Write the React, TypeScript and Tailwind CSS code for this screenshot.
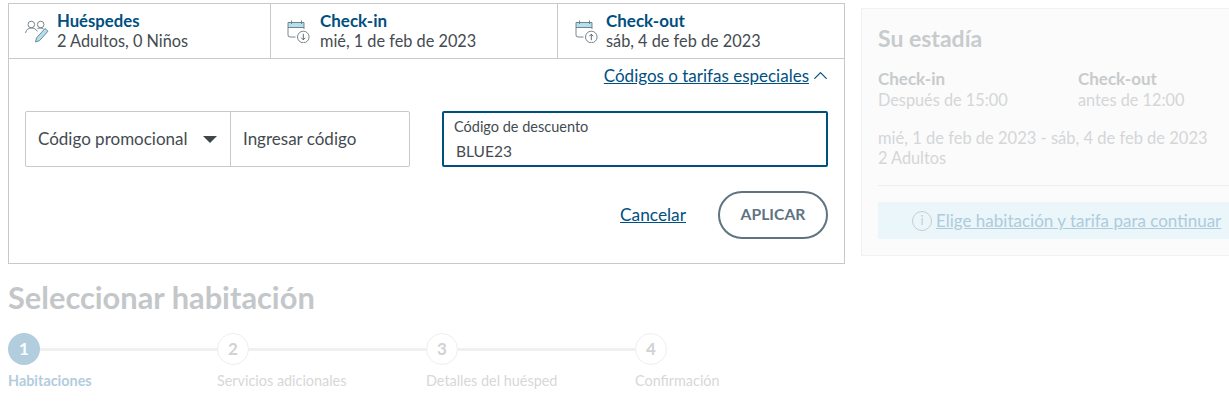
import React from 'react';
import { ChevronUp } from 'lucide-react';

const GuestsIcon = () => (
  <svg width="26" height="26" viewBox="0 0 26 26" fill="none" className="shrink-0">
    <circle cx="6.300" cy="6.500" r="3.300" stroke="#6b7880" strokeWidth="0.9" />
    <circle cx="15.700" cy="6.500" r="3.300" stroke="#6b7880" strokeWidth="0.9" />
    <path d="M.5 15c.6-3.400 3-5 5.800-5s5 1.200 6 3.400M12.500 10.600c1-.4 1.800-.6 2.800-.6 1.300 0 2.500.4 3.400 1.100" stroke="#6b7880" strokeWidth="0.9" />
    <path d="M10.500 24l1-4 8.500-9.500 3 2.700-8.500 9.500z" fill="#b5deee" stroke="#5f7f90" strokeWidth="0.9" strokeLinejoin="round" />
  </svg>
);

const CalendarIcon = ({ dir }: { dir: 'down' | 'up' }) => (
  <svg width="24" height="24" viewBox="0 0 24 24" fill="none" className="shrink-0">
    <rect x="2" y="3.500" width="16" height="5" fill="#b5deee" />
    <path d="M9.500 18H4a2 2 0 0 1-2-2V3.500h16v6.500M2 8.500h16" stroke="#6b7880" strokeWidth="0.9" />
    <path d="M5.500 1.500v3.500M15.500 1.500v3.500" stroke="#6b7880" strokeWidth="0.9" />
    <circle cx="17.300" cy="18" r="5.800" stroke="#6b7880" strokeWidth="0.9" />
    {dir === 'down' ? (
      <path d="M17.300 14.800v6M15.300 18.800l2 2 2-2" stroke="#4d5a62" strokeWidth="0.9" />
    ) : (
      <path d="M17.300 21.200v-6M15.300 17.200l2-2 2 2" stroke="#4d5a62" strokeWidth="0.9" />
    )}
  </svg>
);

const steps = [
  { n: 1, label: 'Habitaciones' },
  { n: 2, label: 'Servicios adicionales' },
  { n: 3, label: 'Detalles del huésped' },
  { n: 4, label: 'Confirmación' },
];

export default function App() {
  return (
    <div className="h-[407px] w-[1229px] overflow-hidden bg-white font-['Lato','Liberation_Sans',sans-serif] text-[16.300px] text-[#444b50]">
      <div className="flex items-start gap-4 pl-2 pt-[3px]">
        <div className="w-[837px] shrink-0">
          {/* Booking box */}
          <div className="h-[261px] w-full border border-[#c9c9c9]">
            <div className="flex h-[55px] border-b border-[#c9c9c9]">
              <div className="flex w-[262px] items-center gap-[6px] border-r border-[#c9c9c9] pl-4">
                <GuestsIcon />
                <div className="leading-[20px]">
                  <div className="text-[16.700px] font-bold text-[#00507f]">Huéspedes</div>
                  <div>2 Adultos, 0 Niños</div>
                </div>
              </div>
              <div className="flex w-[287px] items-center gap-[10px] border-r border-[#c9c9c9] pl-[15px]">
                <CalendarIcon dir="down" />
                <div className="leading-[20px]">
                  <div className="text-[17px] font-bold text-[#00507f]">Check-in</div>
                  <div>mié, 1 de feb de 2023</div>
                </div>
              </div>
              <div className="flex flex-1 items-center gap-[8px] pl-4">
                <CalendarIcon dir="up" />
                <div className="leading-[20px]">
                  <div className="text-[17px] font-bold text-[#00507f]">Check-out</div>
                  <div>sáb, 4 de feb de 2023</div>
                </div>
              </div>
            </div>

            <div className="px-4">
              <div className="flex h-[52px] items-start justify-end pt-[6px] text-[#00507f]">
                <a className="text-[17px] leading-[22px] underline">Códigos o tarifas especiales</a>
                <ChevronUp size={23} strokeWidth={1.300} className="-mr-[4px] -mt-[1px]" />
              </div>

              <div className="flex gap-8">
                <div className="flex h-14 w-[385px] rounded-[2px] border border-[#c9c9c9]">
                  <div className="flex w-[205px] items-center justify-between border-r border-[#c9c9c9] pl-3 pr-[13px] text-[17px]">
                    <span>Código promocional</span>
                    <span className="h-0 w-0 border-x-[7px] border-t-[7px] border-x-transparent border-t-[#3f464b]" />
                  </div>
                  <div className="flex flex-1 items-center pl-3 text-[17px]">Ingresar código</div>
                </div>
                <div className="h-14 w-[386px] rounded-[2px] border-2 border-[#00507f] pl-[10px] pt-[5px]">
                  <div className="text-[14.500px] leading-[18px]">Código de descuento</div>
                  <div className="pl-[2px] pt-[5px] text-[15.500px] leading-[20px]">BLUE23</div>
                </div>
              </div>

              <div className="mt-6 flex items-center justify-end gap-8">
                <a className="text-[17.300px] text-[#00507f] underline">Cancelar</a>
                <button className="h-12 w-[110px] rounded-full border-2 border-[#5f7480] text-[15.700px] font-bold text-[#5f7480]">
                  APLICAR
                </button>
              </div>
            </div>
          </div>

          {/* Steps */}
          <h1 className="mt-[17px] text-[30.800px] font-bold leading-[34px] text-[#c4c7ca]">Seleccionar habitación</h1>
          <div className="mt-[18px] flex">
            {steps.map((s) => (
              <div key={s.n} className="w-[209px]">
                <div className="flex items-center">
                  {s.n === 1 ? (
                    <div className="flex h-8 w-8 shrink-0 items-center justify-center rounded-full bg-[#b2cddd] text-[17px] font-bold text-white">
                      {s.n}
                    </div>
                  ) : (
                    <div className="flex h-8 w-8 shrink-0 items-center justify-center rounded-full border border-[#eeeeee] text-[17px] font-bold text-[#d0d2d4]">
                      {s.n}
                    </div>
                  )}
                  {s.n < 4 && <div className="h-[3px] flex-1 bg-[#f0f0f0]" />}
                </div>
                <div className={`mt-2 text-[14.400px] leading-[16px] ${s.n === 1 ? 'font-bold text-[#b2cddd]' : 'text-[#d6d8d9]'}`}>
                  {s.label}
                </div>
              </div>
            ))}
          </div>
        </div>

        {/* Stay summary */}
        <div className="mt-[5px] h-[248px] w-[420px] shrink-0 border border-[#f1f1f1] bg-[#fbfbfb] pl-4 text-[#d4d6d8]">
          <h2 className="mt-4 text-[23px] font-bold leading-[26px] text-[#c8cbcd]">Su estadía</h2>
          <div className="mt-[17px] flex leading-[21px]">
            <div className="w-[200px]">
              <div className="text-[17px] font-bold text-[#c8cbcd]">Check-in</div>
              <div>Después de 15:00</div>
            </div>
            <div>
              <div className="text-[17px] font-bold text-[#c8cbcd]">Check-out</div>
              <div>antes de 12:00</div>
            </div>
          </div>
          <div className="mt-[18px] text-[16.500px] leading-[20px]">mié, 1 de feb de 2023 - sáb, 4 de feb de 2023</div>
          <div className="leading-[20px]">2 Adultos</div>
          <div className="mt-[17px] border-t border-[#efefef]" />
          <div className="mt-4 flex h-[37px] items-center bg-[#ebf6fb] pl-[34px]">
            <span className="flex h-[20px] w-[20px] items-center justify-center rounded-full border border-[#c4cdd2] text-[13px] leading-none text-[#c4cdd2]">i</span>
            <a className="ml-[4px] text-[17px] text-[#aecbdc] underline">Elige habitación y tarifa para continuar</a>
          </div>
        </div>
      </div>
    </div>
  );
}
